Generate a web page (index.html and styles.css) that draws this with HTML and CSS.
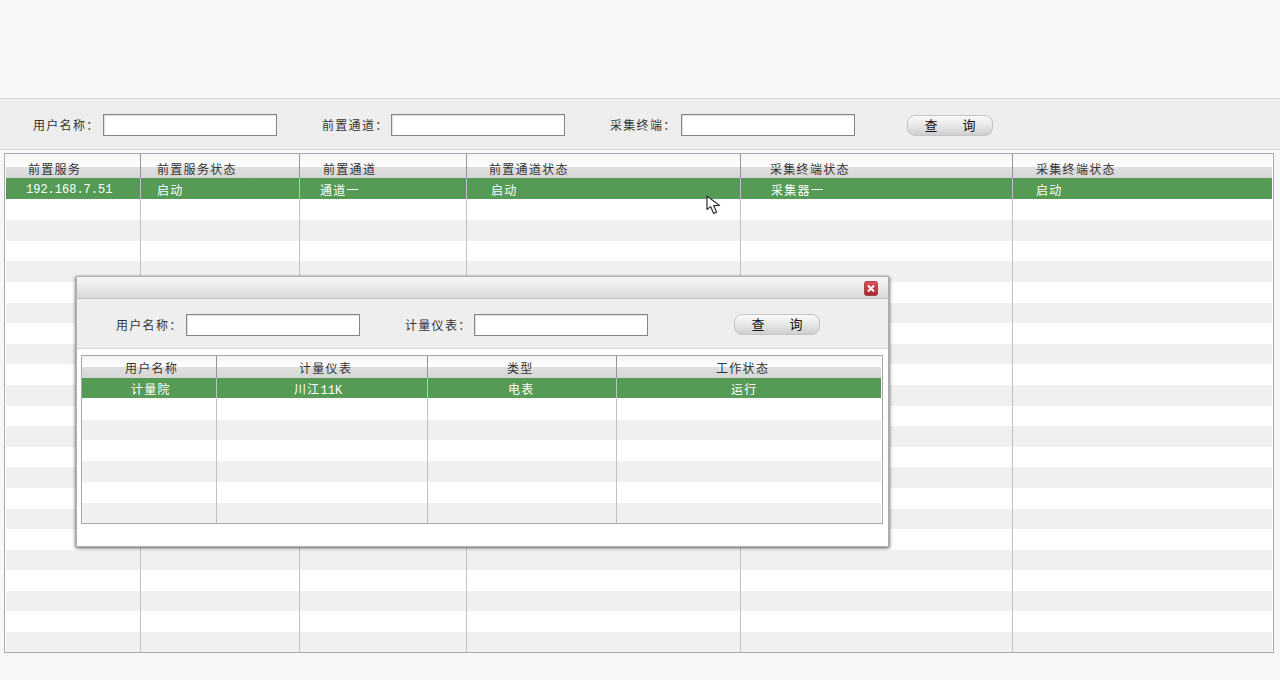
FILE: index.html
```html
<!DOCTYPE html>
<html lang="zh-CN">
<head>
<meta charset="utf-8">
<title>采集终端状态</title>
<link rel="stylesheet" href="styles.css">
</head>
<body>
<div class="page">
  <form class="filter main-filter">
    <label>用户名称：</label><input type="text">
    <label>前置通道：</label><input type="text">
    <label>采集终端：</label><input type="text">
    <button type="button" class="query"><span>查</span><span>询</span></button>
  </form>
  <div class="grid main-grid">
    <div class="row head"><div>前置服务</div><div>前置服务状态</div><div>前置通道</div><div>前置通道状态</div><div>采集终端状态</div><div>采集终端状态</div></div>
    <div class="row sel"><div class="num">192.168.7.51</div><div>启动</div><div>通道一</div><div>启动</div><div>采集器一</div><div>启动</div></div>
    <div class="row"><div></div><div></div><div></div><div></div><div></div><div></div></div>
    <div class="row"><div></div><div></div><div></div><div></div><div></div><div></div></div>
    <div class="row"><div></div><div></div><div></div><div></div><div></div><div></div></div>
    <div class="row"><div></div><div></div><div></div><div></div><div></div><div></div></div>
    <div class="row"><div></div><div></div><div></div><div></div><div></div><div></div></div>
    <div class="row"><div></div><div></div><div></div><div></div><div></div><div></div></div>
    <div class="row"><div></div><div></div><div></div><div></div><div></div><div></div></div>
    <div class="row"><div></div><div></div><div></div><div></div><div></div><div></div></div>
    <div class="row"><div></div><div></div><div></div><div></div><div></div><div></div></div>
    <div class="row"><div></div><div></div><div></div><div></div><div></div><div></div></div>
    <div class="row"><div></div><div></div><div></div><div></div><div></div><div></div></div>
    <div class="row"><div></div><div></div><div></div><div></div><div></div><div></div></div>
    <div class="row"><div></div><div></div><div></div><div></div><div></div><div></div></div>
    <div class="row"><div></div><div></div><div></div><div></div><div></div><div></div></div>
    <div class="row"><div></div><div></div><div></div><div></div><div></div><div></div></div>
    <div class="row"><div></div><div></div><div></div><div></div><div></div><div></div></div>
    <div class="row"><div></div><div></div><div></div><div></div><div></div><div></div></div>
    <div class="row"><div></div><div></div><div></div><div></div><div></div><div></div></div>
    <div class="row"><div></div><div></div><div></div><div></div><div></div><div></div></div>
    <div class="row"><div></div><div></div><div></div><div></div><div></div><div></div></div>
    <div class="row"><div></div><div></div><div></div><div></div><div></div><div></div></div>
    <div class="row"><div></div><div></div><div></div><div></div><div></div><div></div></div>
  </div>

  <svg class="cursor" width="16" height="20" viewBox="0 0 16 20" aria-hidden="true">
    <path d="M1 1 L1 14.5 L4.6 11.6 L7.6 18.4 L10.6 17 L7.6 10.6 L13.6 10.4 Z" fill="#fff" stroke="#333" stroke-width="1.2" stroke-linejoin="round"/>
  </svg>

  <div class="dialog">
    <div class="titlebar">
      <svg class="close" width="14" height="15" viewBox="0 0 14 15" aria-hidden="true">
        <defs>
          <linearGradient id="closeFill" x1="0" y1="0" x2="0" y2="1">
            <stop offset="0" stop-color="#e2525a"/>
            <stop offset="1" stop-color="#a9242c"/>
          </linearGradient>
        </defs>
        <rect x="0.5" y="0.5" width="13" height="14" rx="2" fill="url(#closeFill)" stroke="#a0494d"/>
        <path d="M4 4.5 L10 10.5 M10 4.5 L4 10.5" stroke="#fff" stroke-width="2"/>
      </svg>
    </div>
    <form class="filter dialog-filter">
      <label>用户名称：</label><input type="text">
      <label>计量仪表：</label><input type="text">
      <button type="button" class="query"><span>查</span><span>询</span></button>
    </form>
    <div class="dialog-body">
      <div class="grid sub-grid">
        <div class="row head"><div>用户名称</div><div>计量仪表</div><div>类型</div><div>工作状态</div></div>
        <div class="row sel"><div>计量院</div><div>川江<span class="num">11K</span></div><div>电表</div><div>运行</div></div>
        <div class="row"><div></div><div></div><div></div><div></div></div>
        <div class="row"><div></div><div></div><div></div><div></div></div>
        <div class="row"><div></div><div></div><div></div><div></div></div>
        <div class="row"><div></div><div></div><div></div><div></div></div>
        <div class="row"><div></div><div></div><div></div><div></div></div>
        <div class="row"><div></div><div></div><div></div><div></div></div>
      </div>
    </div>
  </div>
</div>
</body>
</html>
```

FILE: styles.css
```css
* { box-sizing: border-box; }

html, body {
  margin: 0;
  height: 680px;
  overflow: hidden;
  background: #f7f7f7;
}

body {
  font: 12px/16px "Noto Sans CJK SC", "Liberation Sans", sans-serif;
  color: #222;
}

.page {
  position: relative;
  width: 1280px;
  height: 680px;
  padding-top: 98px;
}

/* filter bars */
.filter {
  display: grid;
  align-items: center;
  background: #eeeeee;
  border-top: 1px solid #d6d6d6;
  border-bottom: 1px solid #d6d6d6;
}

.filter label {
  letter-spacing: 1.3px;
  white-space: nowrap;
  color: #333;
}

.filter input {
  width: 174px;
  height: 22px;
  margin: 0;
  padding: 0;
  background: #fff;
  border: 1px solid #858585;
  box-shadow: inset 1px 1px 1px #dedede;
  border-radius: 0;
}

.main-filter {
  height: 52px;
  padding: 2px 0 0 33px;
  margin: 0 0 3px;
  grid-template-columns: 70px 174px 45px 69px 174px 45px 71px 174px 52px 86px;
}

.main-filter label:nth-of-type(1) { grid-column: 1; }
.main-filter input:nth-of-type(1) { grid-column: 2; }
.main-filter label:nth-of-type(2) { grid-column: 4; }
.main-filter input:nth-of-type(2) { grid-column: 5; }
.main-filter label:nth-of-type(3) { grid-column: 7; }
.main-filter input:nth-of-type(3) { grid-column: 8; }
.main-filter .query { grid-column: 10; }

.query {
  display: flex;
  justify-content: center;
  gap: 25px;
  width: 86px;
  height: 21px;
  margin: 0;
  padding: 1px 0 0;
  border: 1px solid #c4c4c4;
  border-radius: 8px;
  background: linear-gradient(#fafafa, #e9e9e9 45%, #cfcfcf);
  font: inherit;
  font-size: 13px;
  color: #111;
}

/* grids */
.grid {
  background: #fff;
  border: 1px solid #a6abb2;
  overflow: hidden;
}

.row {
  display: grid;
  height: 20.6px;
  background: #fff;
}

.row:nth-child(even) { background: #f0f0f0; }

.row > div {
  border-right: 1px solid #bcc2cc;
  white-space: nowrap;
  letter-spacing: 1.3px;
  height: 100%;
}

.row > div:last-child { border-right: 0; }

.row > .num { letter-spacing: 0; }

.row.head {
  background: linear-gradient(#f3f3f3, #fff 50%, #fdfdfd 53%, #dfdfdf 53%, #d6d6d6);
}

.row.head > div {
  border-right-color: #8f96a2;
  color: #333;
}

.row.sel {
  background: #569b55;
  color: #fff;
}

.num {
  font-family: "Liberation Mono", monospace;
  font-size: 12px;
  letter-spacing: 0;
}

/* main table */
.main-grid {
  margin-left: 4px;
  width: 1270px;
  height: 500px;
  padding: 0 1px;
}

.main-grid .row {
  grid-template-columns: 135px 159px 167px 274px 272px 259px;
}

.main-grid .row.head { height: 24px; }
.main-grid .row.head > div { padding-top: 7px; }
.main-grid .row.sel { height: 21px; }
.main-grid .row.sel > div { padding-top: 4px; }
.main-grid .row.sel + .row { height: 21.2px; }

.main-grid .row.head > div:nth-child(1) { padding-left: 22px; }
.main-grid .row.head > div:nth-child(2) { padding-left: 16px; }
.main-grid .row.head > div:nth-child(3) { padding-left: 23px; }
.main-grid .row.head > div:nth-child(4) { padding-left: 22px; }
.main-grid .row.head > div:nth-child(5) { padding-left: 29px; }
.main-grid .row.head > div:nth-child(6) { padding-left: 23px; }

.main-grid .row.sel > div:nth-child(1) { padding-left: 20px; }
.main-grid .row.sel > div:nth-child(2) { padding-left: 16px; }
.main-grid .row.sel > div:nth-child(3) { padding-left: 20px; }
.main-grid .row.sel > div:nth-child(4) { padding-left: 24px; }
.main-grid .row.sel > div:nth-child(5) { padding-left: 30px; }
.main-grid .row.sel > div:nth-child(6) { padding-left: 23px; }

/* pointer captured in the screenshot */
.cursor {
  position: absolute;
  left: 706px;
  top: 195px;
}

/* dialog */
.dialog {
  position: absolute;
  left: 76px;
  top: 276px;
  width: 813px;
  height: 271px;
  display: flex;
  flex-direction: column;
  background: #fff;
  border: 1px solid #b0aeae;
  box-shadow: -1px 1px 3px #8a8888, 1px 1px 3px #8a8888;
}

.titlebar {
  display: flex;
  justify-content: flex-end;
  align-items: flex-start;
  height: 22px;
  padding: 4px 10px 0 0;
  background: linear-gradient(#f8f8f8, #d8d8d8);
  border-bottom: 1px solid #c4c4c4;
}

.dialog-filter {
  height: 50px;
  padding: 2px 0 0 39px;
  border-top: 0;
  grid-template-columns: 70px 174px 45px 69px 174px 86px 86px;
}

.dialog-filter label:nth-of-type(1) { grid-column: 1; }
.dialog-filter input:nth-of-type(1) { grid-column: 2; }
.dialog-filter label:nth-of-type(2) { grid-column: 4; }
.dialog-filter input:nth-of-type(2) { grid-column: 5; }
.dialog-filter .query { grid-column: 7; }

.dialog-body {
  flex: 1;
  padding: 6px 5px 0 4px;
}

.sub-grid {
  width: 802px;
  height: 169px;
  padding-right: 1px;
  border-color: #a8a8a8;
}

.sub-grid .row {
  grid-template-columns: 135px 211px 189px 264px;
  height: 20.8px;
}

.sub-grid .row > div { border-right-color: #c0c0c0; }

.sub-grid .row.head { height: 22px; background: linear-gradient(#f3f3f3, #fff 45%, #fdfdfd 48%, #dfdfdf 48%, #d6d6d6); }
.sub-grid .row.head > div { padding-top: 4px; border-right-color: #8f96a2; }
.sub-grid .row.sel { height: 20px; }
.sub-grid .row.sel > div { padding-top: 3px; border-right-color: #bcc2cc; }
.sub-grid .row.sel + .row { height: 21.6px; }

.sub-grid .row.head > div:nth-child(1) { padding-left: 43px; }
.sub-grid .row.head > div:nth-child(2) { padding-left: 82px; }
.sub-grid .row.head > div:nth-child(3) { padding-left: 79px; }
.sub-grid .row.head > div:nth-child(4) { padding-left: 99px; }

.sub-grid .row.sel > div:nth-child(1) { padding-left: 49px; }
.sub-grid .row.sel > div:nth-child(2) { padding-left: 77px; }
.sub-grid .row.sel > div:nth-child(3) { padding-left: 80px; }
.sub-grid .row.sel > div:nth-child(4) { padding-left: 114px; }
```
